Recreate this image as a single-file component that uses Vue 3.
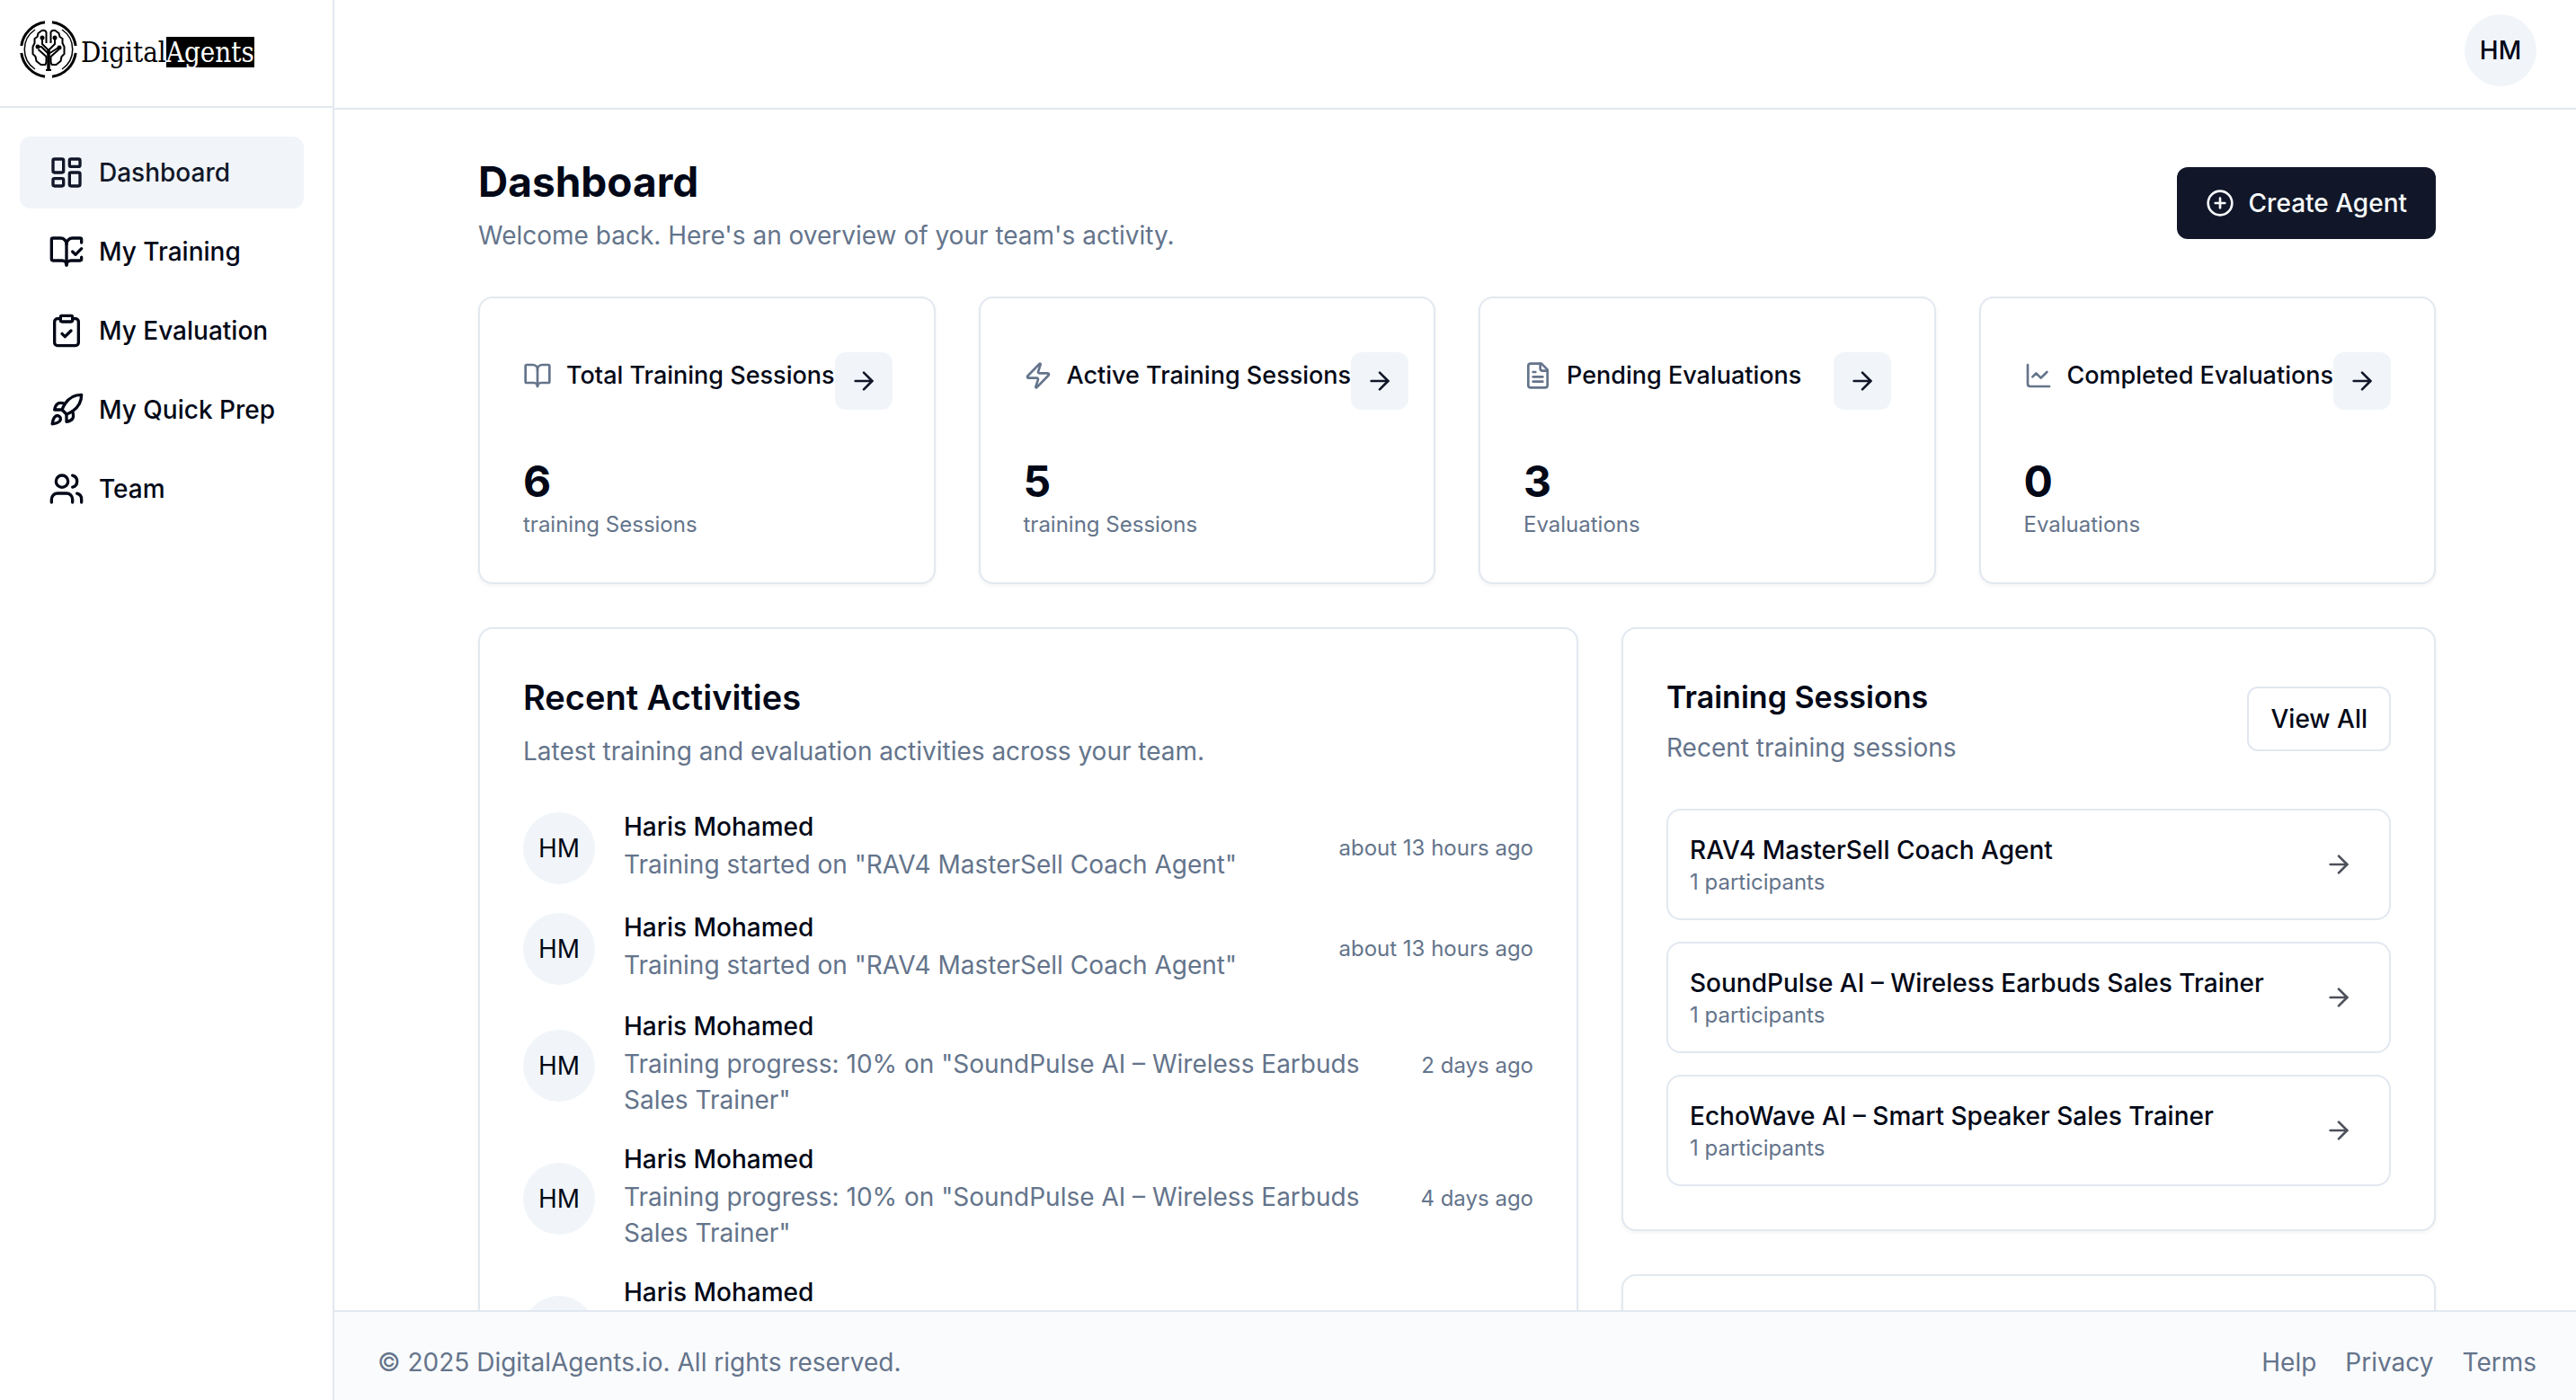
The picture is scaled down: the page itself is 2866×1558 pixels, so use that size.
<script setup>
const icons = {
  dashboard:
    '<rect width="7" height="9" x="3" y="3" rx="1"/><rect width="7" height="5" x="14" y="3" rx="1"/><rect width="7" height="9" x="14" y="12" rx="1"/><rect width="7" height="5" x="3" y="16" rx="1"/>',
  training:
    '<path d="M12 21V7"/><path d="m16 12 2 2 4-4"/><path d="M22 6V4a1 1 0 0 0-1-1h-5a4 4 0 0 0-4 4 4 4 0 0 0-4-4H3a1 1 0 0 0-1 1v13a1 1 0 0 0 1 1h6a3 3 0 0 1 3 3 3 3 0 0 1 3-3h6a1 1 0 0 0 1-1v-1.3"/>',
  evaluation:
    '<rect width="8" height="4" x="8" y="2" rx="1"/><path d="M16 4h2a2 2 0 0 1 2 2v14a2 2 0 0 1-2 2H6a2 2 0 0 1-2-2V6a2 2 0 0 1 2-2h2"/><path d="m9 14 2 2 4-4"/>',
  rocket:
    '<path d="M4.5 16.5c-1.5 1.26-2 5-2 5s3.74-.5 5-2c.71-.84.7-2.13-.09-2.91a2.18 2.18 0 0 0-2.91-.09z"/><path d="m12 15-3-3a22 22 0 0 1 2-3.95A12.88 12.88 0 0 1 22 2c0 2.72-.78 7.5-6 11a22.35 22.35 0 0 1-4 2z"/><path d="M9 12H4s.55-3.03 2-4c1.62-1.08 5 0 5 0"/><path d="M12 15v5s3.03-.55 4-2c1.08-1.62 0-5 0-5"/>',
  team:
    '<path d="M16 21v-2a4 4 0 0 0-4-4H6a4 4 0 0 0-4 4v2"/><circle cx="9" cy="7" r="4"/><path d="M22 21v-2a4 4 0 0 0-3-3.87"/><path d="M16 3.13a4 4 0 0 1 0 7.75"/>',
  book:
    '<path d="M12 7v14"/><path d="M3 18a1 1 0 0 1-1-1V4a1 1 0 0 1 1-1h5a4 4 0 0 1 4 4 4 4 0 0 1 4-4h5a1 1 0 0 1 1 1v13a1 1 0 0 1-1 1h-6a3 3 0 0 0-3 3 3 3 0 0 0-3-3z"/>',
  zap:
    '<path d="M4 14a1 1 0 0 1-.78-1.63l9.9-10.2a.5.5 0 0 1 .86.46l-1.92 6.02A1 1 0 0 0 13 10h7a1 1 0 0 1 .78 1.63l-9.9 10.2a.5.5 0 0 1-.86-.46l1.92-6.02A1 1 0 0 0 11 14z"/>',
  file:
    '<path d="M15 2H6a2 2 0 0 0-2 2v16a2 2 0 0 0 2 2h12a2 2 0 0 0 2-2V7Z"/><path d="M14 2v4a2 2 0 0 0 2 2h4"/><path d="M10 9H8"/><path d="M16 13H8"/><path d="M16 17H8"/>',
  chart: '<path d="M3 3v16a2 2 0 0 0 2 2h16"/><path d="m19 9-5 5-4-4-3 3"/>',
  arrow: '<path d="M5 12h14"/><path d="m12 5 7 7-7 7"/>',
  plus: '<circle cx="12" cy="12" r="10"/><path d="M8 12h8"/><path d="M12 8v8"/>'
}

const nav = [
  { label: 'Dashboard', icon: 'dashboard', active: true },
  { label: 'My Training', icon: 'training' },
  { label: 'My Evaluation', icon: 'evaluation' },
  { label: 'My Quick Prep', icon: 'rocket' },
  { label: 'Team', icon: 'team' }
]

const stats = [
  { title: 'Total Training Sessions', icon: 'book', value: 6, unit: 'training Sessions' },
  { title: 'Active Training Sessions', icon: 'zap', value: 5, unit: 'training Sessions' },
  { title: 'Pending Evaluations', icon: 'file', value: 3, unit: 'Evaluations' },
  { title: 'Completed Evaluations', icon: 'chart', value: 0, unit: 'Evaluations' }
]

const started = 'Training started on "RAV4 MasterSell Coach Agent"'
const progress = 'Training progress: 10% on "SoundPulse AI – Wireless Earbuds Sales Trainer"'
const activities = [
  { text: started, time: 'about 13 hours ago' },
  { text: started, time: 'about 13 hours ago' },
  { text: progress, time: '2 days ago' },
  { text: progress, time: '4 days ago' },
  { text: progress, time: '4 days ago' }
]

const sessions = [
  'RAV4 MasterSell Coach Agent',
  'SoundPulse AI – Wireless Earbuds Sales Trainer',
  'EchoWave AI – Smart Speaker Sales Trainer'
]
</script>

<template>
  <div class="shell">
    <aside class="sidebar">
      <a class="logo" href="#">
        <svg class="logo-mark" viewBox="0 0 64 64" fill="none" stroke="#000" aria-hidden="true">
          <g stroke-width="3">
            <path d="M28 1.8A30.5 30.5 0 0 0 1.8 28" />
            <path d="M36 1.8A30.5 30.5 0 0 1 62.2 28" />
            <path d="M1.8 36A30.5 30.5 0 0 0 28 62.2" />
            <path d="M62.2 36A30.5 30.5 0 0 1 36 62.2" />
          </g>
          <g stroke-width="1.5">
            <path d="M17 10A26.5 26.5 0 0 0 17 54" />
            <path d="M47 10A26.5 26.5 0 0 1 47 54" />
          </g>
          <g stroke-width="2" stroke-linejoin="round">
            <path d="M29.5 25V13q-1-3-5-2l-4 3-1 4-3 2v5l-2 4v8l3 3 1 5 5 4h5l1-3v-6l-9-8" />
            <path d="M34.5 25V13q1-3 5-2l4 3 1 4 3 2v5l2 4v8l-3 3-1 5-5 4h-5l-1-3v-6l9-8" />
            <path d="M25 20v6l7 7 7-7v-6" />
            <path d="M20 29h4l8 8 11-7" />
          </g>
          <path d="M32 33v22" stroke-width="3.5" />
          <path d="M29 55h6" stroke-width="2" />
          <g fill="#000" stroke="none">
            <circle cx="25" cy="19" r="2.5" />
            <circle cx="39" cy="19" r="2.5" />
            <circle cx="20" cy="29" r="2.5" />
            <circle cx="44" cy="30" r="2.5" />
          </g>
        </svg>
        <span class="logo-text">Digital<span class="logo-box">Agents</span></span>
      </a>
      <nav class="nav">
        <a v-for="n in nav" :key="n.label" href="#" class="nav-item" :class="{ active: n.active }">
          <svg class="icon icon-lg" viewBox="0 0 24 24" v-html="icons[n.icon]" />
          {{ n.label }}
        </a>
      </nav>
    </aside>

    <div class="main">
      <header class="topbar">
        <button class="avatar user">HM</button>
      </header>

      <main class="content">
        <div class="page-head">
          <div>
            <h1>Dashboard</h1>
            <p class="muted">Welcome back. Here's an overview of your team's activity.</p>
          </div>
          <button class="btn-primary">
            <svg class="icon" viewBox="0 0 24 24" v-html="icons.plus" />
            Create Agent
          </button>
        </div>

        <section class="stats">
          <article v-for="s in stats" :key="s.title" class="card stat">
            <div class="stat-head">
              <h3>
                <svg class="icon" viewBox="0 0 24 24" v-html="icons[s.icon]" />
                {{ s.title }}
              </h3>
              <button class="btn-icon" :aria-label="s.title">
                <svg class="icon" viewBox="0 0 24 24" v-html="icons.arrow" />
              </button>
            </div>
            <div class="stat-value">{{ s.value }}</div>
            <p class="small">{{ s.unit }}</p>
          </article>
        </section>

        <section class="panels">
          <article class="card activities">
            <h2>Recent Activities</h2>
            <p class="muted sub">Latest training and evaluation activities across your team.</p>
            <ul class="activity-list">
              <li v-for="(a, i) in activities" :key="i">
                <span class="avatar">HM</span>
                <div class="activity-body">
                  <p class="name">Haris Mohamed</p>
                  <p class="muted">{{ a.text }}</p>
                </div>
                <time class="small">{{ a.time }}</time>
              </li>
            </ul>
          </article>

          <div class="side">
            <article class="card">
              <div class="sessions-head">
                <div>
                  <h2 class="compact">Training Sessions</h2>
                  <p class="muted">Recent training sessions</p>
                </div>
                <button class="btn-outline">View All</button>
              </div>
              <ul class="session-list">
                <li v-for="s in sessions" :key="s">
                  <div>
                    <p class="session-title">{{ s }}</p>
                    <p class="small">1 participants</p>
                  </div>
                  <button class="btn-ghost" :aria-label="s">
                    <svg class="icon" viewBox="0 0 24 24" v-html="icons.arrow" />
                  </button>
                </li>
              </ul>
            </article>
            <article class="card next-card"></article>
          </div>
        </section>
      </main>

      <footer class="footer">
        <span>© 2025 DigitalAgents.io. All rights reserved.</span>
        <div class="footer-links">
          <a href="#">Help</a>
          <a href="#">Privacy</a>
          <a href="#">Terms</a>
        </div>
      </footer>
    </div>
  </div>
</template>

<style>
body {
  margin: 0;
  background: #fff;
}
</style>

<style scoped>
.shell {
  display: flex;
  height: 100vh;
  font-family: Inter, 'Liberation Sans', sans-serif;
  font-size: 28px;
  line-height: 40px;
  color: #020817;
}
.shell *,
.shell {
  box-sizing: border-box;
}
h1,
h2,
h3,
p,
ul {
  margin: 0;
  padding: 0;
}
ul {
  list-style: none;
}
a {
  color: inherit;
  text-decoration: none;
}
button {
  display: flex;
  align-items: center;
  justify-content: center;
  padding: 0;
  border: 0;
  background: none;
  color: inherit;
  font: inherit;
  font-weight: 500;
  cursor: pointer;
}
.icon {
  flex: none;
  width: 32px;
  height: 32px;
  fill: none;
  stroke: currentColor;
  stroke-width: 2;
  stroke-linecap: round;
  stroke-linejoin: round;
}
.icon-lg {
  width: 40px;
  height: 40px;
}
.muted {
  color: #64748b;
}
.small {
  font-size: 24px;
  line-height: 32px;
  color: #64748b;
}

.sidebar {
  flex: none;
  width: 372px;
  border-right: 2px solid #e2e8f0;
}
.logo {
  display: flex;
  align-items: center;
  gap: 4px;
  height: 120px;
  padding: 0 22px 8px;
  border-bottom: 2px solid #e2e8f0;
}
.logo-mark {
  flex: none;
  width: 64px;
  height: 64px;
}
.logo-text {
  display: flex;
  padding-top: 6px;
  font-family: 'DejaVu Serif Condensed', 'DejaVu Serif', serif;
  font-size: 31px;
  line-height: 34px;
  color: #000;
}
.logo-box {
  background: #000;
  color: #fff;
}
.nav {
  display: flex;
  flex-direction: column;
  gap: 8px;
  padding: 32px 32px 0 22px;
}
.nav-item {
  display: flex;
  align-items: center;
  gap: 16px;
  height: 80px;
  padding: 0 32px;
  border-radius: 12px;
  font-weight: 500;
  white-space: nowrap;
}
.nav-item.active {
  background: #f1f5f9;
  color: #111729;
}

.main {
  display: flex;
  flex: 1;
  flex-direction: column;
  min-width: 0;
}
.topbar {
  display: flex;
  flex: none;
  justify-content: flex-end;
  padding: 16px 44px 24px;
  border-bottom: 2px solid #e2e8f0;
}
.avatar {
  display: flex;
  flex: none;
  align-items: center;
  justify-content: center;
  width: 80px;
  height: 80px;
  border-radius: 50%;
  background: #f1f5f9;
}
.content {
  flex: 1;
  min-height: 0;
  overflow-y: auto;
  scrollbar-width: none;
  padding: 48px 156px 48px 160px;
}
.page-head {
  display: flex;
  align-items: center;
  justify-content: space-between;
}
h1 {
  margin-bottom: 8px;
  font-size: 46px;
  line-height: 64px;
  font-weight: 700;
}
.btn-primary {
  gap: 16px;
  height: 80px;
  padding: 0 32px;
  border-radius: 12px;
  background: #111729;
  color: #f8fafc;
}

.card {
  padding: 48px;
  border: 2px solid #e2e8f0;
  border-radius: 16px;
  background: #fff;
  box-shadow: 0 2px 4px rgba(0, 0, 0, 0.05);
}
.stats {
  display: grid;
  grid-template-columns: repeat(4, minmax(0, 1fr));
  gap: 48px;
  margin-top: 48px;
}
.stat {
  padding-top: 60px;
}
.stat-head {
  display: flex;
  align-items: flex-start;
  justify-content: space-between;
  margin-bottom: 48px;
}
h3 {
  display: flex;
  flex: none;
  align-items: center;
  gap: 16px;
  font-size: 27px;
  line-height: 52px;
  font-weight: 500;
  white-space: nowrap;
}
h3 .icon {
  color: #64748b;
}
.btn-icon {
  flex: none;
  width: 64px;
  height: 64px;
  border-radius: 12px;
  background: #f1f5f9;
  color: #111729;
}
.stat-value {
  font-size: 48px;
  line-height: 64px;
  font-weight: 700;
}

.panels {
  display: grid;
  grid-template-columns: repeat(7, minmax(0, 1fr));
  gap: 48px;
  margin-top: 48px;
}
.activities {
  grid-column: span 4;
}
.side {
  display: flex;
  grid-column: span 3;
  flex-direction: column;
  gap: 48px;
}
h2 {
  font-size: 38px;
  line-height: 56px;
  font-weight: 600;
}
h2.compact {
  margin-bottom: 8px;
  font-size: 34px;
}
.sub {
  margin-top: 12px;
}
.activity-list {
  display: flex;
  flex-direction: column;
  gap: 32px;
  margin-top: 48px;
}
.activity-list li {
  display: flex;
  align-items: center;
  gap: 32px;
}
.activity-body {
  flex: 1;
  min-width: 0;
}
.name {
  margin-bottom: 8px;
  line-height: 28px;
  font-weight: 500;
}
time {
  flex: none;
}
.sessions-head {
  display: flex;
  align-items: center;
  justify-content: space-between;
  margin-bottom: 48px;
}
.btn-outline {
  height: 72px;
  padding: 0 24px;
  border: 2px solid #e2e8f0;
  border-radius: 12px;
}
.session-list {
  display: flex;
  flex-direction: column;
  gap: 24px;
}
.session-list li {
  display: flex;
  align-items: center;
  justify-content: space-between;
  padding: 24px;
  border: 2px solid #e2e8f0;
  border-radius: 16px;
}
.session-title {
  font-weight: 500;
}
.btn-ghost {
  width: 64px;
  height: 64px;
  opacity: 0.7;
}
.next-card {
  flex: 1;
}

.footer {
  display: flex;
  flex: none;
  justify-content: space-between;
  padding: 36px 44px 22px 48px;
  border-top: 2px solid #e2e8f0;
  background: #fafbfd;
  color: #64748b;
}
.footer-links {
  display: flex;
  gap: 32px;
}
</style>
